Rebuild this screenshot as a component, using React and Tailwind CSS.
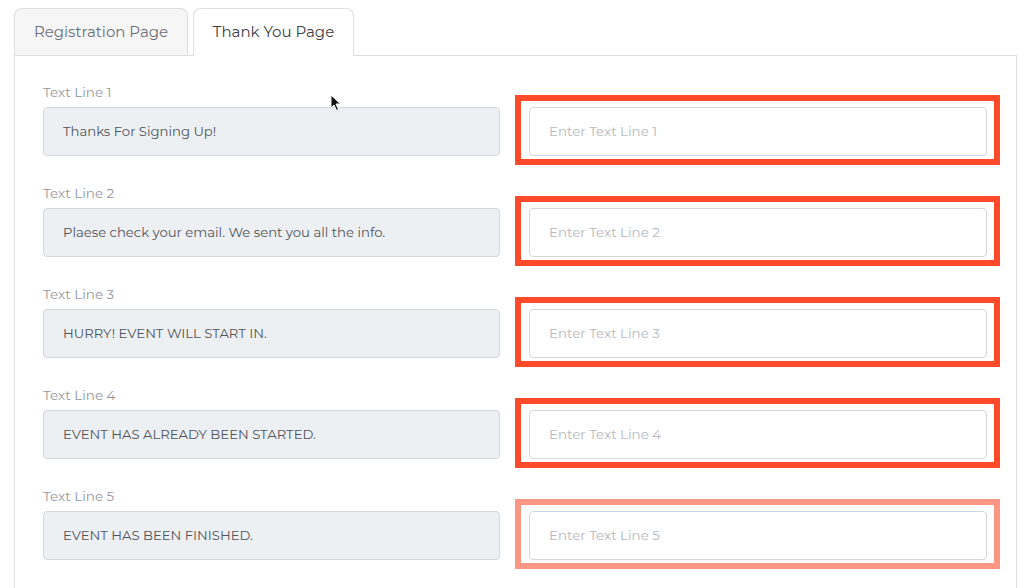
const rows = [
  { label: "Text Line 1", value: "Thanks For Signing Up!", faded: false },
  { label: "Text Line 2", value: "Plaese check your email. We sent you all the info.", faded: false },
  { label: "Text Line 3", value: "HURRY! EVENT WILL START IN.", faded: false },
  { label: "Text Line 4", value: "EVENT HAS ALREADY BEEN STARTED.", faded: false },
  { label: "Text Line 5", value: "EVENT HAS BEEN FINISHED.", faded: true },
];

const Cursor = () => (
  <svg className="absolute left-[330px] top-[94px]" width="12" height="18" viewBox="0 0 12 18">
    <path d="M1 1 L1 14 L4 11 L6.5 16.5 L8.5 15.5 L6 10 L10.5 10 Z" fill="#111" stroke="#fff" strokeWidth="1" />
  </svg>
);

const App = () => {
  return (
    <div className="relative w-[1024px] h-[588px] bg-white overflow-hidden font-['Montserrat','Noto_Sans',sans-serif]">
      {/* Tabs */}
      <div className="flex items-end pl-[14px] pt-[8px] gap-[5px]">
        <div className="w-[174px] h-[47px] flex items-center justify-center bg-[#f6f6f7] border border-[#dcdee1] border-b-0 rounded-t-[8px] text-[15px] text-[#6b6f75]">
          Registration Page
        </div>
        <div className="relative z-10 w-[161px] h-[48px] -mb-px flex items-center justify-center bg-white border border-[#dcdee1] border-b-0 rounded-t-[8px] text-[15px] text-[#3a3d42]">
          Thank You Page
        </div>
      </div>

      {/* Panel */}
      <div className="ml-[14px] w-[1003px] h-[560px] border border-[#dcdee1] pl-[28px] pt-[28px]">
        <div className="flex flex-col gap-[20px]">
          {rows.map((r, i) => (
            <div key={i} className="flex items-start gap-[15px]">
              <div className="w-[457px] flex flex-col">
                <span className="text-[13.5px] leading-[17px] text-[#93979d]">{r.label}</span>
                <div className="mt-[6px] h-[49px] flex items-center px-[19px] bg-[#edf0f3] border border-[#d3d6db] rounded-[4px] text-[13.2px] text-[#50545a]">
                  {r.value}
                </div>
              </div>
              <div
                className={`mt-[11px] w-[485px] h-[70px] border-[6px] pl-[8px] pr-[7px] pt-[6px] ${
                  r.faded ? "border-[#fb9584]" : "border-[#fc4a2a]"
                }`}
              >
                <div className="h-[49px] flex items-center px-[19px] bg-white border border-[#d3d6db] rounded-[4px] text-[13.4px] text-[#b5b8be]">
                  Enter {r.label}
                </div>
              </div>
            </div>
          ))}
        </div>
      </div>

      <Cursor />
    </div>
  );
};

export default App;
